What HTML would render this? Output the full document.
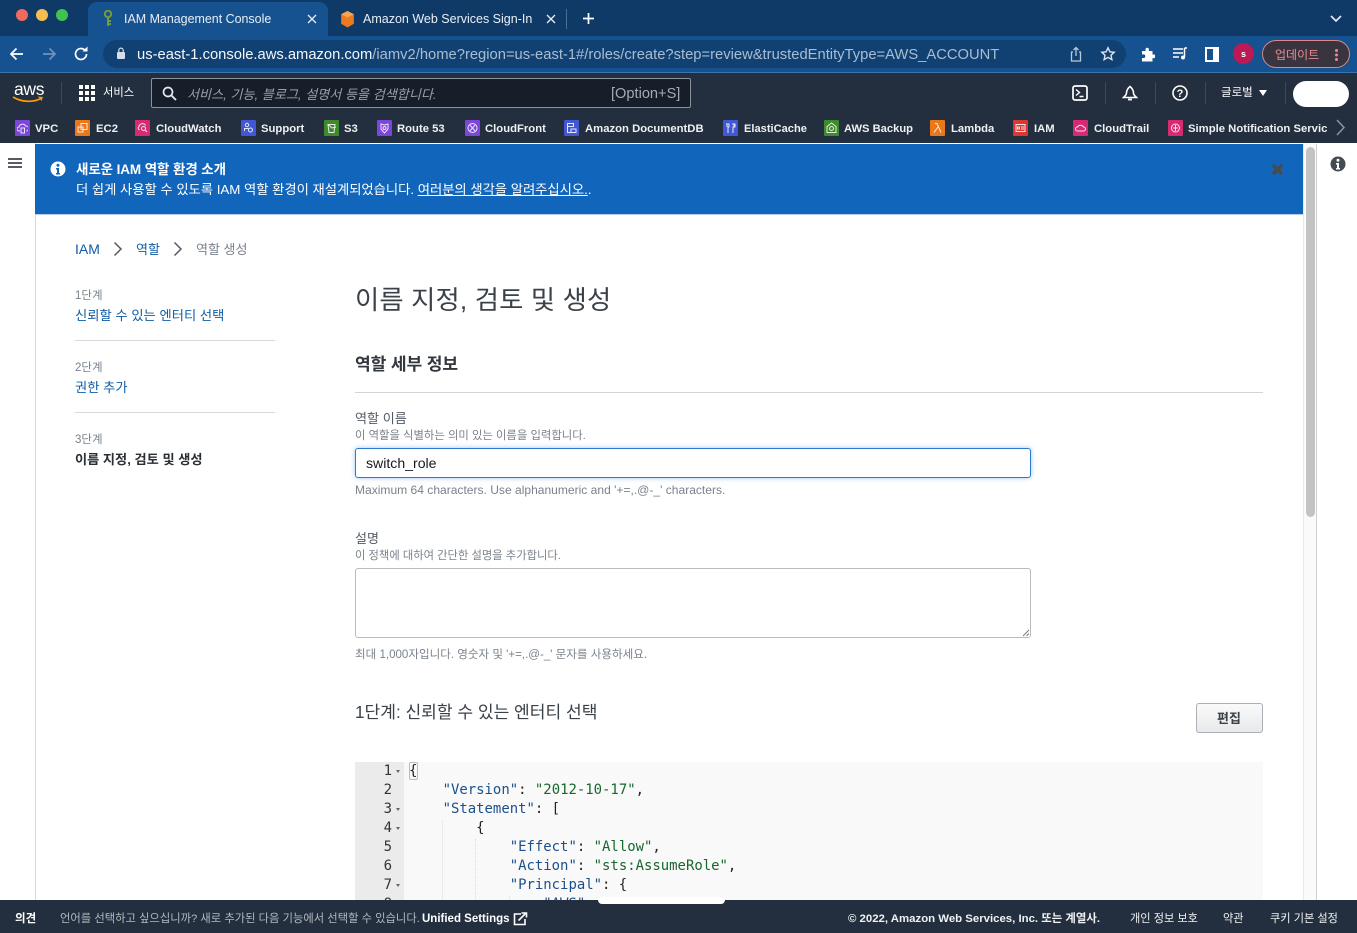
<!DOCTYPE html>
<html lang="ko"><head><meta charset="utf-8"><title>IAM Management Console</title>
<style>
html,body{margin:0;padding:0;width:1357px;height:933px;overflow:hidden;background:#fff}
body{position:relative;font-family:"Liberation Sans","Noto Sans CJK KR",sans-serif;font-size:12px;color:#16191f}
.a,.t{position:absolute}
.t{white-space:nowrap;line-height:20px}
.w{color:#fff}
.bm{font-weight:700;font-size:11.3px;color:#eef0f2;top:119px}
.ic{position:absolute;top:120px;width:15px;height:16px;border-radius:1px}
.ic svg{position:absolute;left:2px;top:2px;width:11px;height:12px;fill:none;stroke:#fff;stroke-width:1;opacity:.85}
.lnk{color:#0f5da8}
.gry{color:#7a828c}
.m{position:absolute;left:409px;font:13.95px/19px "DejaVu Sans Mono","Liberation Mono",monospace;color:#222;white-space:pre}
.n{position:absolute;width:37px;left:355px;text-align:right;font:14px/19px "DejaVu Sans Mono","Liberation Mono",monospace;color:#333}
.k{color:#1d4f8c}.s{color:#19662f}
.f{position:absolute;left:396px;width:0;height:0;border-left:2.5px solid transparent;border-right:2.5px solid transparent;border-top:3px solid #666}
.sep{position:absolute;width:1px;background:#3f4956}
</style></head><body>

<!-- browser tab strip -->
<div class="a" style="left:0;top:0;width:1357px;height:36px;background:#0f3a67"></div>
<div class="a" style="left:16px;top:9px;width:12px;height:12px;border-radius:50%;background:#ef6a5f"></div>
<div class="a" style="left:36px;top:9px;width:12px;height:12px;border-radius:50%;background:#f4bd4f"></div>
<div class="a" style="left:56px;top:9px;width:12px;height:12px;border-radius:50%;background:#3fc24f"></div>
<div class="a" style="left:88px;top:2px;width:240px;height:34px;background:#15528f;border-radius:9px 9px 0 0"></div>
<svg class="a" style="left:102px;top:10px" width="12" height="17" viewBox="0 0 12 17"><circle cx="6" cy="4" r="3.2" fill="none" stroke="#6f9b3c" stroke-width="2"/><path d="M6 7v9M6 11h3M6 14h3" stroke="#6f9b3c" stroke-width="2"/></svg>
<span class="t" style="left:124px;top:9px;font-size:12.45px;color:#e9eff6">IAM Management Console</span>
<svg class="a" style="left:307px;top:14px" width="10" height="10"><path d="M1 1l8 8M9 1l-8 8" stroke="#e6edf4" stroke-width="1.300"/></svg>
<svg class="a" style="left:340px;top:10px" width="15" height="18" viewBox="0 0 13 17"><path d="M6.500 1 12.500 4v9l-6 3.500L.5 13V4z" fill="#ec7a1f"/><path d="M.5 4l6 3 6-3-6-3z" fill="#f5a552"/></svg>
<span class="t" style="left:363px;top:9px;font-size:12.5px;color:#e9eff6">Amazon Web Services Sign-In</span>
<svg class="a" style="left:546px;top:14px" width="10" height="10"><path d="M1 1l8 8M9 1l-8 8" stroke="#e6edf4" stroke-width="1.300"/></svg>
<div class="a" style="left:566px;top:9px;width:1px;height:20px;background:#4a6f96"></div>
<svg class="a" style="left:582px;top:12px" width="13" height="13"><path d="M6.500 1v11M1 6.500h11" stroke="#fff" stroke-width="1.700"/></svg>
<svg class="a" style="left:1330px;top:15px" width="12" height="8"><path d="M1 1l5 5 5-5" stroke="#e6edf4" stroke-width="1.600" fill="none"/></svg>

<!-- address bar -->
<div class="a" style="left:0;top:36px;width:1357px;height:36px;background:#15528f"></div>
<svg class="a" style="left:9px;top:46px" width="16" height="16"><path d="M14 8H2M7.500 2.500 2 8l5.500 5.500" stroke="#fff" stroke-width="1.700" fill="none"/></svg>
<svg class="a" style="left:41px;top:46px" width="16" height="16"><path d="M2 8h12M8.500 2.500 14 8l-5.500 5.500" stroke="#6f93bb" stroke-width="1.700" fill="none"/></svg>
<svg class="a" style="left:73px;top:46px" width="16" height="16" viewBox="0 0 16 16"><path d="M13.500 8A5.500 5.500 0 1 1 11.800 4" stroke="#fff" stroke-width="1.700" fill="none"/><path d="M9.500 5.500h5v-5z" fill="#fff"/></svg>
<div class="a" style="left:103px;top:40px;width:1023px;height:28px;border-radius:14px;background:#114172"></div>
<svg class="a" style="left:116px;top:47px" width="10" height="13"><rect x="1" y="5" width="8" height="7" rx="1" fill="#d5dfe9"/><path d="M2.800 5V3.300a2.200 2.200 0 0 1 4.400 0V5" fill="none" stroke="#d5dfe9" stroke-width="1.200"/></svg>
<span class="t" style="left:137px;top:45px;font-size:14.76px;color:#f4f7fa">us-east-1.console.aws.amazon.com<span style="color:#a9bdd2">/iamv2/home?region=us-east-1#/roles/create?step=review&amp;trustedEntityType=AWS_ACCOUNT</span></span>
<svg class="a" style="left:1069px;top:46px" width="14" height="17" viewBox="0 0 14 17"><path d="M4 6H2.500v9h9V6H10M7 10V1.500M4.500 4 7 1.500 9.500 4" fill="none" stroke="#b9c9da" stroke-width="1.300"/></svg>
<svg class="a" style="left:1100px;top:46px" width="16" height="16" viewBox="0 0 16 16"><path d="M8 1.800l1.900 4 4.300.5-3.200 3 .9 4.300L8 11.400l-3.900 2.200.9-4.300-3.200-3 4.300-.5z" fill="none" stroke="#dbe4ee" stroke-width="1.400"/></svg>
<svg class="a" style="left:1141px;top:47px" width="14" height="15" viewBox="0 0 14 15"><path d="M1 4h3.500V2.500a1.700 1.700 0 0 1 3.400 0V4h3.600v3.500H13a1.800 1.800 0 0 1 0 3.600h-1.500V14.500H1V11h1.500a1.800 1.800 0 0 0 0-3.600H1z" fill="#fff"/></svg>
<svg class="a" style="left:1172px;top:47px" width="16" height="14" viewBox="0 0 16 14"><path d="M1 2h10M1 6h10M1 10h6" stroke="#fff" stroke-width="1.500"/><path d="M12.500 1v9" stroke="#fff" stroke-width="1.500"/><circle cx="11" cy="10.500" r="2" fill="#fff"/><path d="M12.500 1H15" stroke="#fff" stroke-width="1.500"/></svg>
<div class="a" style="left:1205px;top:47px;width:6px;height:11px;border:2px solid #fff;border-right-width:6px"></div>
<div class="a" style="left:1233px;top:43px;width:21px;height:21px;border-radius:50%;background:#bb1a55"></div>
<span class="t" style="left:1241px;top:44px;font-size:9px;color:#fff;font-weight:700">s</span>
<div class="a" style="left:1262px;top:40px;width:86px;height:26px;border-radius:14px;border:1px solid #d98a86;background:#3a3340"></div>
<span class="t" style="left:1275px;top:45px;font-size:12px;color:#e88d88">업데이트</span>
<div class="a" style="left:1335px;top:49px;width:3px;height:3px;border-radius:50%;background:#e88d88;box-shadow:0 4.500px 0 #e88d88,0 9px 0 #e88d88"></div>
<div class="a" style="left:0;top:72px;width:1357px;height:1px;background:#3b75ae"></div>

<!-- aws console nav -->
<div class="a" style="left:0;top:73px;width:1357px;height:70px;background:#232f3e"></div>
<span class="t" style="left:14px;top:79px;font-size:17.500px;color:#fff;letter-spacing:-.3px">aws</span>
<svg class="a" style="left:12px;top:96px" width="33" height="8" viewBox="0 0 33 8"><path d="M1 1c8 5 20 6 29 1" stroke="#f90" stroke-width="1.700" fill="none"/><path d="M26 .5l5 .5-1.500 4z" fill="#f90"/></svg>
<div class="sep" style="left:61px;top:82px;height:22px"></div>
<div class="a" style="left:79px;top:85px;width:4px;height:4px;background:#fff;box-shadow:6px 0 #fff,12px 0 #fff,0 6px #fff,6px 6px #fff,12px 6px #fff,0 12px #fff,6px 12px #fff,12px 12px #fff"></div>
<span class="t" style="left:103px;top:83px;font-size:11.300px;color:#fff">서비스</span>
<div class="a" style="left:151px;top:78px;width:538px;height:28px;background:#161e2a;border:1px solid #8a929c;border-radius:2px"></div>
<svg class="a" style="left:162px;top:86px" width="15" height="15"><circle cx="6" cy="6" r="4.500" stroke="#e7e9ec" stroke-width="1.700" fill="none"/><path d="M9.500 9.500 14 14" stroke="#e7e9ec" stroke-width="1.900"/></svg>
<span class="t" style="left:187px;top:85px;font-size:13.100px;color:#98a0aa;font-style:italic">서비스, 기능, 블로그, 설명서 등을 검색합니다.</span>
<span class="t" style="left:611px;top:84px;font-size:14.6px;color:#a4abb4">[Option+S]</span>
<svg class="a" style="left:1072px;top:85px" width="16" height="16"><rect x="1" y="1" width="14" height="14" rx="2" fill="none" stroke="#fff" stroke-width="1.700"/><path d="M4 4.500 7.500 7.500 4 10.500M7.500 11.500h4" stroke="#fff" stroke-width="1.400" fill="none"/></svg>
<div class="sep" style="left:1105px;top:82px;height:22px"></div>
<svg class="a" style="left:1122px;top:85px" width="16" height="17" viewBox="0 0 16 17"><path d="M8 1.500C5 4 4.500 6 4.500 8c0 2-2 3.500-3 4.500h13c-1-1-3-2.500-3-4.500 0-2-.5-4-3.500-6.500z" fill="none" stroke="#fff" stroke-width="1.600"/><path d="M6 14.500h4" stroke="#fff" stroke-width="1.800"/></svg>
<div class="sep" style="left:1155px;top:82px;height:22px"></div>
<svg class="a" style="left:1172px;top:85px" width="16" height="16"><circle cx="8" cy="8" r="7" fill="none" stroke="#fff" stroke-width="1.600"/><text x="8" y="12" font-size="11" font-weight="700" font-family="Liberation Sans" text-anchor="middle" fill="#fff">?</text></svg>
<div class="sep" style="left:1205px;top:82px;height:22px"></div>
<span class="t" style="left:1221px;top:83px;font-size:11.500px;color:#fff">글로벌</span>
<div class="a" style="left:1259px;top:90px;width:0;height:0;border-left:4.500px solid transparent;border-right:4.500px solid transparent;border-top:6px solid #fff"></div>
<div class="sep" style="left:1285px;top:82px;height:22px"></div>
<div class="a" style="left:1293px;top:81px;width:56px;height:26px;border-radius:13px;background:#fff"></div>

<!-- bookmarks -->
<div class="ic" style="left:15px;background:#7b46d9"><svg viewBox="0 0 11 12"><path d="M3 9H2a2 2 0 0 1 0-4 3.500 3.500 0 0 1 6.500-1A2.500 2.500 0 0 1 9.500 9"/><rect x="4" y="6" width="3.500" height="5"/></svg></div><span class="t bm" style="left:35px">VPC</span>
<div class="ic" style="left:75px;background:#e8781a"><svg viewBox="0 0 11 12"><rect x="4" y="1.500" width="6" height="6"/><rect x="1" y="5" width="5" height="5"/></svg></div><span class="t bm" style="left:96px">EC2</span>
<div class="ic" style="left:135px;background:#d62a72"><svg viewBox="0 0 11 12"><path d="M2.500 8A2 2 0 0 1 2 4.500a3.500 3.500 0 0 1 6.500-1"/><circle cx="6.500" cy="6.500" r="2"/><path d="M8 8l2 2"/></svg></div><span class="t bm" style="left:156px">CloudWatch</span>
<div class="ic" style="left:241px;background:#4157d3"><svg viewBox="0 0 11 12"><circle cx="4" cy="3" r="1.700"/><path d="M1.500 9V6.500h4"/><circle cx="7.500" cy="8" r="2"/></svg></div><span class="t bm" style="left:261px">Support</span>
<div class="ic" style="left:324px;background:#3f8a2c"><svg viewBox="0 0 11 12"><path d="M2 2.500h7l-1 8H3zM2 2.500 6 6l4-1"/></svg></div><span class="t bm" style="left:344px">S3</span>
<div class="ic" style="left:377px;background:#7b46d9"><svg viewBox="0 0 11 12"><path d="M2 2l3.500 1L9 2v5L5.500 11 2 7z"/><circle cx="5.500" cy="6" r="1.500"/></svg></div><span class="t bm" style="left:397px">Route 53</span>
<div class="ic" style="left:465px;background:#7b46d9"><svg viewBox="0 0 11 12"><circle cx="5.500" cy="6" r="4.500"/><path d="M3 3l5 6M8 3 3 9"/></svg></div><span class="t bm" style="left:485px">CloudFront</span>
<div class="ic" style="left:564px;background:#4157d3"><svg viewBox="0 0 11 12"><path d="M1.500 1.500h6v3h-6zM1.500 4.500v6h4M5 7h5v3.500H5z"/></svg></div><span class="t bm" style="left:585px">Amazon DocumentDB</span>
<div class="ic" style="left:723px;background:#4157d3"><svg viewBox="0 0 11 12"><path d="M1 2h3v3H3v6M7 2h3v3H8v6M2 2v3M9 2v3"/></svg></div><span class="t bm" style="left:744px;font-size:11.1px">ElastiCache</span>
<div class="ic" style="left:824px;background:#3f8a2c"><svg viewBox="0 0 11 12"><path d="M5.500 1 10 4.500v6H1v-6z"/><circle cx="5.500" cy="6.500" r="2"/></svg></div><span class="t bm" style="left:844px;font-size:11.2px">AWS Backup</span>
<div class="ic" style="left:930px;background:#e8781a"><svg viewBox="0 0 11 12"><path d="M3 1.500h2l4 9M6 5 2 10.500"/></svg></div><span class="t bm" style="left:951px">Lambda</span>
<div class="ic" style="left:1013px;background:#d93636"><svg viewBox="0 0 11 12"><rect x="1" y="2.500" width="9" height="7"/><rect x="2.500" y="5" width="2" height="2"/><path d="M6 5h3M6 7h3"/></svg></div><span class="t bm" style="left:1034px">IAM</span>
<div class="ic" style="left:1073px;background:#d62a72"><svg viewBox="0 0 11 12"><path d="M3 9H2.500a2 2 0 0 1 0-4 3.500 3.500 0 0 1 6 0 2 2 0 0 1 0 4z"/></svg></div><span class="t bm" style="left:1094px">CloudTrail</span>
<div class="ic" style="left:1168px;background:#d62a72"><svg viewBox="0 0 11 12"><circle cx="5.500" cy="6" r="4"/><path d="M3 6h5M5.500 3v6"/></svg></div><span class="t bm" style="left:1188px;width:139px;overflow:hidden">Simple Notification Service</span>
<svg class="a" style="left:1335px;top:119px" width="11" height="17"><path d="M2 1l7 7.500L2 16" stroke="#8b939d" stroke-width="1.500" fill="none"/></svg>

<!-- sidebar / frame -->
<div class="a" style="left:35px;top:143px;width:1px;height:760px;background:#d5dbdb"></div>
<div class="a" style="left:8px;top:158px;width:14px;height:2px;background:#545b64;box-shadow:0 4px #545b64,0 8px #545b64"></div>

<!-- flash -->
<div class="a" style="left:35px;top:144px;width:1268px;height:70px;background:#1166bb;border-bottom:1px solid #b7cfe6"></div>
<svg class="a" style="left:50px;top:161px" width="16" height="16"><circle cx="8" cy="8" r="7.500" fill="#fff"/><circle cx="8" cy="4.200" r="1.500" fill="#1166bb"/><path d="M6 7h3v5h1v1.500H6V12h1V8.500H6z" fill="#1166bb"/></svg>
<span class="t w" style="left:76px;top:160px;font-size:13.500px;font-weight:700;letter-spacing:-.1px">새로운 IAM 역할 환경 소개</span>
<span class="t w" style="left:76px;top:180px;font-size:13.350px;letter-spacing:-.04px">더 쉽게 사용할 수 있도록 IAM 역할 환경이 재설계되었습니다. <span style="text-decoration:underline">여러분의 생각을 알려주십시오.</span>.</span>
<svg class="a" style="left:1271px;top:163px" width="13" height="13"><path d="M2 2l9 9M11 2l-9 9" stroke="#444b55" stroke-width="3.400"/></svg>

<!-- scrollbar and right rail -->
<div class="a" style="left:1303px;top:144px;width:14px;height:760px;background:#fafafa;border-left:1px solid #e8e8e8;border-right:1px solid #cfcfcf;box-sizing:border-box"></div>
<div class="a" style="left:1306px;top:147px;width:9px;height:370px;border-radius:5px;background:#c3c3c3"></div>
<svg class="a" style="left:1330px;top:156px" width="16" height="16"><circle cx="8" cy="8" r="7.500" fill="#444b55"/><circle cx="8" cy="4.200" r="1.500" fill="#fff"/><path d="M6 7h3v5h1v1.500H6V12h1V8.500H6z" fill="#fff"/></svg>

<!-- breadcrumb -->
<span class="t lnk" style="left:75px;top:239px;font-size:14px">IAM</span>
<svg class="a" style="left:113px;top:241px" width="10" height="16"><path d="M1.500 1.500 8 8l-6.500 6.500" stroke="#545b64" stroke-width="1.500" fill="none"/></svg>
<span class="t lnk" style="left:136px;top:240px;font-size:13px">역할</span>
<svg class="a" style="left:173px;top:241px" width="10" height="16"><path d="M1.500 1.500 8 8l-6.500 6.500" stroke="#545b64" stroke-width="1.500" fill="none"/></svg>
<span class="t gry" style="left:196px;top:240px;font-size:13px">역할 생성</span>

<!-- steps -->
<span class="t gry" style="left:75px;top:286px;font-size:11.500px">1단계</span>
<span class="t lnk" style="left:75px;top:306px;font-size:13.300px">신뢰할 수 있는 엔터티 선택</span>
<div class="a" style="left:75px;top:340px;width:200px;height:1px;background:#d5dbdb"></div>
<span class="t gry" style="left:75px;top:358px;font-size:11.500px">2단계</span>
<span class="t lnk" style="left:75px;top:378px;font-size:13.300px">권한 추가</span>
<div class="a" style="left:75px;top:412px;width:200px;height:1px;background:#d5dbdb"></div>
<span class="t gry" style="left:75px;top:430px;font-size:11.500px">3단계</span>
<span class="t" style="left:75px;top:450px;font-size:13.200px;font-weight:700;color:#2a2f36">이름 지정, 검토 및 생성</span>

<!-- main -->
<span class="t" style="left:355px;top:290px;font-size:26.300px;color:#3b4148;letter-spacing:.15px">이름 지정, 검토 및 생성</span>
<span class="t" style="left:355px;top:355px;font-size:17.100px;font-weight:700;color:#33383f;letter-spacing:-.1px">역할 세부 정보</span>
<div class="a" style="left:355px;top:392px;width:908px;height:1px;background:#d0d4d8"></div>

<span class="t" style="left:355px;top:409px;font-size:13.100px;color:#545b64">역할 이름</span>
<span class="t gry" style="left:355px;top:426px;font-size:11.350px">이 역할을 식별하는 의미 있는 이름을 입력합니다.</span>
<div class="a" style="left:355px;top:448px;width:676px;height:30px;box-sizing:border-box;border:1px solid #2b7ad1;border-radius:3px;background:#fff;box-shadow:0 0 5px rgba(70,150,230,.55)"></div>
<span class="t" style="left:366px;top:453px;font-size:14.100px;color:#16191f">switch_role</span>
<span class="t gry" style="left:355px;top:480px;font-size:12.050px">Maximum 64 characters. Use alphanumeric and '+=,.@-_' characters.</span>

<span class="t" style="left:355px;top:529px;font-size:13px;color:#545b64">설명</span>
<span class="t gry" style="left:355px;top:546px;font-size:11.300px">이 정책에 대하여 간단한 설명을 추가합니다.</span>
<div class="a" style="left:355px;top:568px;width:676px;height:70px;box-sizing:border-box;border:1px solid #b8bcc1;border-radius:3px;background:#fff"></div>
<svg class="a" style="left:1022px;top:629px" width="8" height="8"><path d="M1 7l6-6M4.500 7 7 4.500" stroke="#777" stroke-width="1"/></svg>
<span class="t gry" style="left:355px;top:645px;font-size:11.550px">최대 1,000자입니다. 영숫자 및 '+=,.@-_' 문자를 사용하세요.</span>

<span class="t" style="left:355px;top:703px;font-size:17.100px;color:#3b4148">1단계: 신뢰할 수 있는 엔터티 선택</span>
<div class="a" style="left:1196px;top:703px;width:67px;height:30px;box-sizing:border-box;border:1px solid #aab0b6;border-radius:3px;background:linear-gradient(#fafafa,#e8e9ea)"></div>
<span class="t" style="left:1217px;top:709px;font-size:13px;font-weight:700;color:#3b4148">편집</span>

<!-- code editor -->
<div class="a" style="left:355px;top:762px;width:908px;height:145px;background:#f9f9f9"></div>
<div class="a" style="left:355px;top:762px;width:49px;height:145px;background:#ebebeb"></div>
<div class="a" style="left:409px;top:762px;width:9px;height:18px;box-sizing:border-box;border:1px solid #bbb;border-radius:2px"></div>
<div class="a" style="left:442px;top:820px;width:0;height:85px;border-left:1px dotted #ddd"></div>
<div class="a" style="left:475px;top:839px;width:0;height:66px;border-left:1px dotted #ddd"></div>
<div class="a" style="left:509px;top:896px;width:0;height:9px;border-left:1px dotted #ddd"></div>
<div class="n" style="top:762px">1</div><div class="f" style="top:770px"></div>
<div class="n" style="top:781px">2</div>
<div class="n" style="top:800px">3</div><div class="f" style="top:808px"></div>
<div class="n" style="top:819px">4</div><div class="f" style="top:827px"></div>
<div class="n" style="top:838px">5</div>
<div class="n" style="top:857px">6</div>
<div class="n" style="top:876px">7</div><div class="f" style="top:884px"></div>
<div class="n" style="top:895px">8</div>
<div class="m" style="top:762px">{</div>
<div class="m" style="top:781px">    <span class="k">"Version"</span>: <span class="s">"2012-10-17"</span>,</div>
<div class="m" style="top:800px">    <span class="k">"Statement"</span>: [</div>
<div class="m" style="top:819px">        {</div>
<div class="m" style="top:838px">            <span class="k">"Effect"</span>: <span class="s">"Allow"</span>,</div>
<div class="m" style="top:857px">            <span class="k">"Action"</span>: <span class="s">"sts:AssumeRole"</span>,</div>
<div class="m" style="top:876px">            <span class="k">"Principal"</span>: {</div>
<div class="m" style="top:895px">                <span class="k">"AWS"</span>:</div>

<!-- footer -->
<div class="a" style="left:0;top:900px;width:1357px;height:33px;background:#232f3e"></div>
<div class="a" style="left:598px;top:897px;width:127px;height:7px;background:#fff;border-radius:0 0 4px 4px"></div>
<span class="t w" style="left:15px;top:909px;font-size:11.500px;font-weight:700">의견</span>
<span class="t" style="left:60px;top:909px;font-size:11.300px;color:#b4b9c0">언어를 선택하고 싶으십니까? 새로 추가된 다음 기능에서 선택할 수 있습니다.</span>
<b class="t" style="left:422px;top:909px;color:#fff;font-size:11.500px">Unified Settings</b>
<svg class="a" style="left:513px;top:912px" width="15" height="14"><path d="M8 2H1.500v10.500H12V7" fill="none" stroke="#fff" stroke-width="1.600"/><path d="M5.500 8.500 13 1M8.500 1H13.500V5.500" fill="none" stroke="#fff" stroke-width="1.600"/></svg>
<span class="t" style="left:848px;top:909px;font-size:11.400px;color:#f0f2f4;font-weight:700">© 2022, Amazon Web Services, Inc. 또는 계열사.</span>
<span class="t" style="left:1130px;top:909px;font-size:11.200px;color:#f0f2f4">개인 정보 보호</span>
<span class="t" style="left:1223px;top:909px;font-size:11.200px;color:#f0f2f4">약관</span>
<span class="t" style="left:1270px;top:909px;font-size:11.200px;color:#f0f2f4">쿠키 기본 설정</span>
</body></html>
